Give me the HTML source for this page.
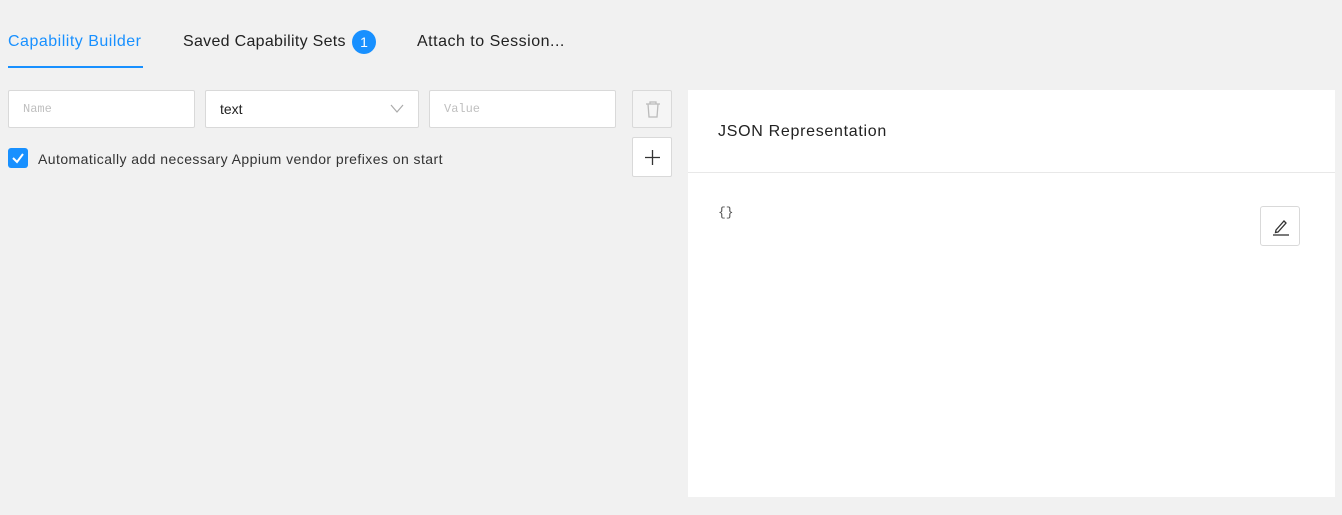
<!DOCTYPE html>
<html><head><style>
body{margin:0;width:1342px;height:515px;background:#f1f1f1;font-family:"Liberation Sans",sans-serif;position:relative;overflow:hidden;color:#222}
.a{position:absolute}
.tab{font-size:16px;top:33px;letter-spacing:0.5px}
.inp{position:absolute;top:90px;height:38px;background:#fff;border:1px solid #d9d9d9;border-radius:2px;box-sizing:border-box}
.ph{font-family:"Liberation Mono",monospace;font-size:12px;color:#bfbfbf;position:absolute;left:14px;top:11px}
</style></head><body>
<div class="a tab" style="left:8px;color:#1890ff">Capability Builder</div>
<div class="a" style="left:8px;top:66px;width:135px;height:2px;background:#1890ff"></div>
<div class="a tab" style="left:183px;letter-spacing:0.3px">Saved Capability Sets</div>
<div class="a" style="left:352px;top:30px;width:24px;height:24px;border-radius:12px;background:#1890ff;color:#fff;font-size:14px;text-align:center;line-height:24px">1</div>
<div class="a tab" style="left:417px">Attach to Session...</div>
<div class="inp" style="left:8px;width:187px"><span class="ph">Name</span></div>
<div class="inp" style="left:205px;width:214px"><span style="position:absolute;left:14px;top:10px;font-size:14px">text</span>
<svg class="a" style="right:14px;top:13px" width="14" height="10"><path d="M1 1L7 8L13 1" fill="none" stroke="#aaa" stroke-width="1.2"/></svg></div>
<div class="inp" style="left:429px;width:187px"><span class="ph">Value</span></div>
<div class="inp" style="left:632px;width:40px;height:38px;background:#f5f5f5">
<svg class="a" style="left:12px;top:10px" width="16" height="17"><path d="M1 3H15M5 3V1H11V3M3 3L4 16H12L13 3" fill="none" stroke="#bbb" stroke-width="1.3"/></svg></div>
<div class="inp" style="left:632px;top:137px;width:40px;height:40px">
<svg class="a" style="left:12px;top:12px" width="15" height="15"><path d="M7.5 0V15M0 7.5H15" stroke="#333" stroke-width="1.3"/></svg></div>
<div class="a" style="left:8px;top:148px;width:20px;height:20px;border-radius:3px;background:#1890ff">
<svg width="20" height="20"><path d="M5 10L9 14L15 6" fill="none" stroke="#fff" stroke-width="2"/></svg></div>
<div class="a" style="left:38px;top:151px;font-size:14px;color:#333;letter-spacing:0.44px">Automatically add necessary Appium vendor prefixes on start</div>
<div class="a" style="left:688px;top:90px;width:647px;height:407px;background:#fff">
<div class="a" style="left:30px;top:33px;font-size:16px;color:#222;letter-spacing:0.7px">JSON Representation</div>
<div class="a" style="left:0;top:82px;width:647px;height:1px;background:#e8e8e8"></div>
<div class="a" style="left:30px;top:115px;font-family:'Liberation Mono',monospace;font-size:13px;color:#555">{}</div>
<div class="a" style="left:572px;top:116px;width:40px;height:40px;border:1px solid #d9d9d9;border-radius:3px;box-sizing:border-box">
<svg class="a" style="left:11px;top:11px" width="18" height="18"><path d="M4 12L12 3L14 5L6 14L3.5 14.5Z" fill="none" stroke="#333" stroke-width="1.3"/><path d="M1 17H17" stroke="#333" stroke-width="1.3"/></svg></div>
</div>
</body></html>
